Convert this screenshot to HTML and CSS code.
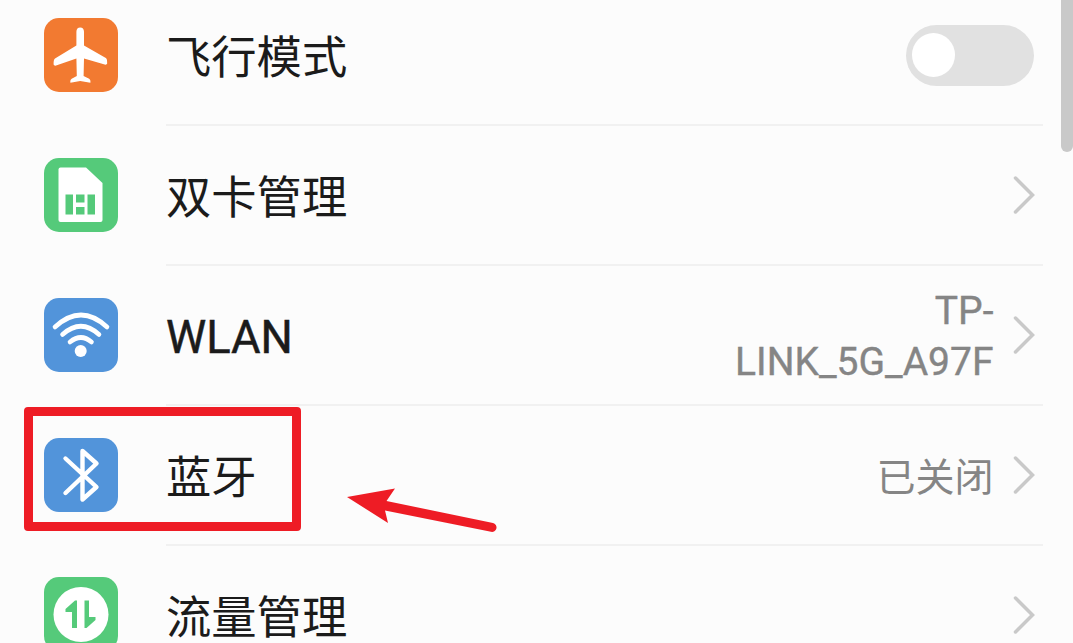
FILE: index.html
```html
<!DOCTYPE html>
<html lang="zh-CN">
<head>
<meta charset="utf-8">
<title>设置</title>
<link rel="stylesheet" href="styles.css">
</head>
<body>
<main class="screen">
  <ul class="settings">
    <li class="row">
      <svg class="icon" viewBox="0 0 74 74"><rect class="orange" width="74" height="74" rx="15"/><path class="fill" d="M36.200 9.500c2.300 0 3.800 1.600 3.800 4.200v13.800l21.400 12.300c1.500.9 1.800 2 1.800 5.700q-.5 1.500-2.500 1L40 40.500l-.4 17.500 5.500 2.700c1.200.7 1.500 2 1.300 4l-10.200-1.800-9.800 1.800c-.2-2 .1-3.300 1.300-4l5.100-2.700-.4-17.500L12.100 47.500q-2 .5-2.500-1c0-3.700.3-5.300 1.800-6.200l21-12.800V13.700c0-2.600 1.500-4.200 3.800-4.200z"/></svg>
      <div class="body"><span class="label">飞行模式</span><span class="switch"><span class="knob"></span></span></div>
    </li>
    <li class="row">
      <svg class="icon" viewBox="0 0 74 74"><rect class="green" width="74" height="74" rx="15"/><path class="fill" d="M16.500 9.500H42L58.500 25v37q0 2-2 2h-40q-2 0-2-2V11.500q0-2 2-2z"/><path class="green" d="M21.500 36.500h7.500v20h-7.500zM32 36.500h8.500v8h-8.500zM32 49h8.500v7.500h-8.500zM43.500 36.500h7.500v20h-7.500z"/></svg>
      <div class="body"><span class="label">双卡管理</span><svg class="chevron" viewBox="0 0 22 40"><path d="M2.500 3l17 17-17 17"/></svg></div>
    </li>
    <li class="row">
      <svg class="icon" viewBox="0 0 74 74"><rect class="blue" width="74" height="74" rx="15"/><g class="waves"><path d="M11 29Q37 5 63 29"/><path d="M18.500 36.500Q37 20 55 36.500"/><path d="M26 44Q37 35 47.500 44"/></g><circle class="fill" cx="36.700" cy="53" r="6"/></svg>
      <div class="body"><span class="label latin">WLAN</span><span class="value">TP-<br>LINK_5G_A97F</span><svg class="chevron" viewBox="0 0 22 40"><path d="M2.500 3l17 17-17 17"/></svg></div>
    </li>
    <li class="row">
      <svg class="icon" viewBox="0 0 74 74"><rect class="blue" width="74" height="74" rx="15"/><path class="bluetooth" d="M21.500 20.500L52.500 49 38.500 61.500V13L52.500 25.500 21.500 55"/></svg>
      <div class="body"><span class="label">蓝牙</span><span class="value status">已关闭</span><svg class="chevron" viewBox="0 0 22 40"><path d="M2.500 3l17 17-17 17"/></svg></div>
    </li>
    <li class="row">
      <svg class="icon" viewBox="0 0 74 74"><rect class="green" width="74" height="74" rx="15"/><circle class="fill" cx="37" cy="37.500" r="27.500"/><path class="green" d="M33 23.500V51h-5V35h-6.500v-3L31 23.500zM40.500 23.500h4.500V40h6.500v3L42.500 51h-2z"/></svg>
      <div class="body"><span class="label">流量管理</span><svg class="chevron" viewBox="0 0 22 40"><path d="M2.500 3l17 17-17 17"/></svg></div>
    </li>
  </ul>
  <div class="scrollbar"></div>
  <div class="highlight"></div>
  <svg class="arrow" viewBox="0 0 150 46"><path class="red" d="M0 11L48 2.500 39.500 15 146 37A4.500 4.500 0 0 1 144 45.800L38 24.500 41 37z"/></svg>
</main>
</body>
</html>
```
FILE: styles.css
```css
* { box-sizing: border-box; }

body {
  margin: 0;
  overflow: hidden;
  background: #fcfcfc;
  font-family: Roboto, "Noto Sans CJK SC", sans-serif;
}

.screen {
  position: relative;
  height: 643px;
  overflow: hidden;
}

.settings {
  list-style: none;
  margin: -13.500px 30px 0 43.500px;
  padding: 0;
}

.row {
  display: flex;
  align-items: center;
  gap: 48.500px;
  height: 139.800px;
}

.icon { flex: none; width: 74px; height: 74px; margin-bottom: 2.500px; }
.orange { fill: #f27a31; }
.green { fill: #55ca7a; }
.blue { fill: #5294da; }
.fill { fill: #fff; }

.waves, .bluetooth {
  fill: none;
  stroke: #fff;
  stroke-width: 4.600;
  stroke-linecap: round;
}
.bluetooth { stroke-width: 4.400; stroke-linejoin: round; }

.body {
  flex: 1;
  display: flex;
  align-items: center;
  height: 100%;
  padding-right: 8px;
  border-bottom: 2px solid #f1f1f1;
}

.label {
  margin-right: auto;
  padding-top: 8px;
  color: #1b1b1b;
  font-size: 45.300px;
  line-height: 60px;
  white-space: nowrap;
}
.latin { padding-top: 6px; -webkit-text-stroke: 0.500px #1b1b1b; }

.value {
  margin-right: 19.500px;
  padding-top: 5px;
  color: #858585;
  font-size: 39px;
  line-height: 51px;
  text-align: right;
  -webkit-text-stroke: 0.400px #858585;
}
.status { padding-top: 7px; -webkit-text-stroke: 0; }

.chevron {
  flex: none;
  width: 22px;
  height: 40px;
  fill: none;
  stroke: #c9c9c9;
  stroke-width: 3.500;
  stroke-linecap: round;
}

.switch {
  width: 128px;
  height: 61px;
  margin-right: 1px;
  padding: 8px 6px;
  border-radius: 31px;
  background: #e1e1e1;
}
.knob {
  display: block;
  width: 43px;
  height: 44px;
  border-radius: 50%;
  background: #fff;
}

.scrollbar {
  position: absolute;
  top: -10px;
  right: 0;
  width: 12px;
  height: 162px;
  border-radius: 6px;
  background: #c9c9c9;
}

.highlight {
  position: absolute;
  left: 24px;
  top: 407px;
  width: 277px;
  height: 124px;
  border: 9px solid #ee1c25;
  border-radius: 4px;
}

.arrow {
  position: absolute;
  left: 347px;
  top: 486px;
  width: 150px;
  height: 46px;
}
.red { fill: #ee1c25; }
```
